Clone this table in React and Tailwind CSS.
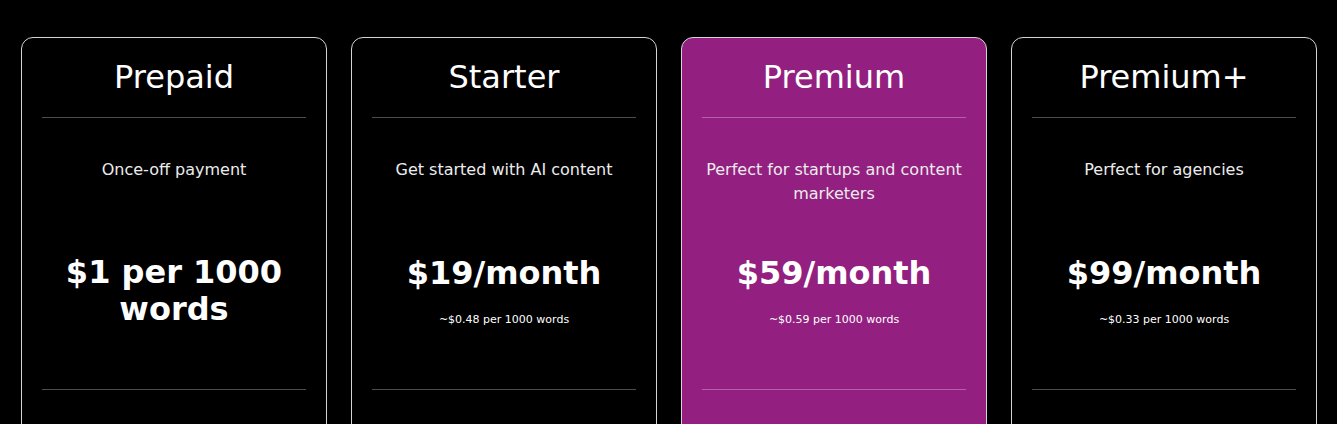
const plans = [
  { name: "Prepaid", blurb: "Once-off payment", price: "$1 per 1000 words", note: null },
  { name: "Starter", blurb: "Get started with AI content", price: "$19/month", note: "~$0.48 per 1000 words" },
  { name: "Premium", blurb: "Perfect for startups and content marketers", price: "$59/month", note: "~$0.59 per 1000 words", featured: true },
  { name: "Premium+", blurb: "Perfect for agencies", price: "$99/month", note: "~$0.33 per 1000 words" },
];

function PlanCard({ plan }) {
  return (
    <div
      className={`flex flex-col rounded-[12px] border border-[#d4d4d4] px-5 pt-5 pb-10 text-center text-white ${
        plan.featured ? "bg-[#931f80]" : "bg-black"
      }`}
    >
      <h2 className="text-[32px] leading-[38px]">{plan.name}</h2>
      <div className="mt-[21px] h-px bg-white/30"></div>

      {/* blurb */}
      <div className="mt-[40px] h-[48px] text-[16px] leading-[24px] text-[#ececec]">{plan.blurb}</div>

      {/* price */}
      <div className="flex h-[170px] flex-col items-center justify-center">
        <p className="px-4 text-[32px] font-bold leading-[37px]">{plan.price}</p>
        {plan.note && <p className="mt-[20px] text-[11px] leading-[16px]">{plan.note}</p>}
      </div>

      <div className="mt-[13px] h-px bg-white/30"></div>
      <div className="h-[120px]"></div>
    </div>
  );
}

export default function App() {
  return (
    <div className="min-h-screen bg-black pl-[21px] pr-[20px] pt-[37px] font-['DejaVu_Sans',sans-serif]">
      <div className="grid grid-cols-4 gap-6">
        {plans.map((plan) => (
          <PlanCard key={plan.name} plan={plan} />
        ))}
      </div>
    </div>
  );
}
